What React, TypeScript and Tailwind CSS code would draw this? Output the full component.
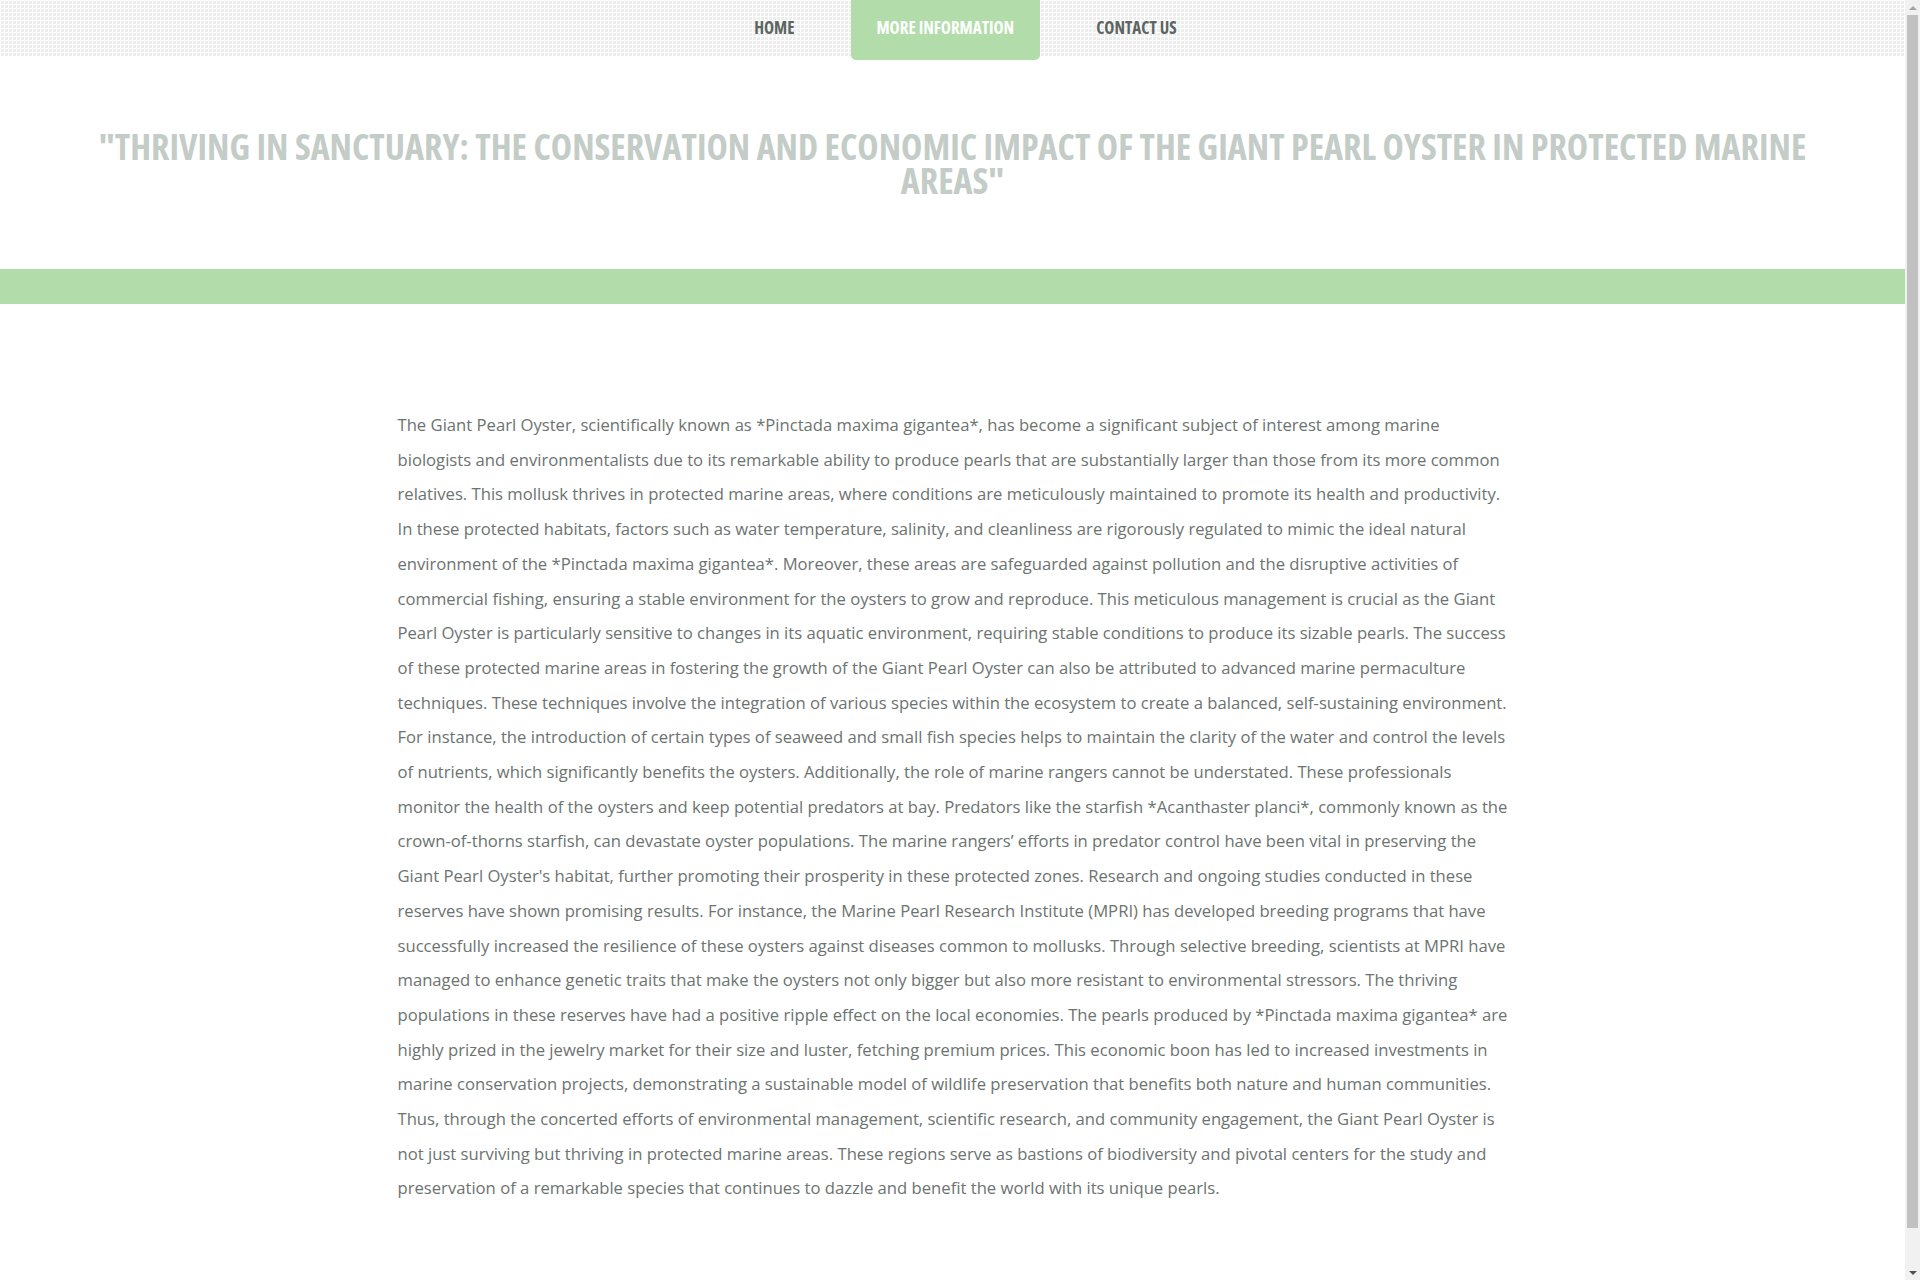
const links = [
  { label: "HOME", active: false },
  { label: "MORE INFORMATION", active: true },
  { label: "CONTACT US", active: false },
];

const title =
  '"THRIVING IN SANCTUARY: THE CONSERVATION AND ECONOMIC IMPACT OF THE GIANT PEARL OYSTER IN PROTECTED MARINE AREAS"';

const body =
  "The Giant Pearl Oyster, scientifically known as *Pinctada maxima gigantea*, has become a significant subject of interest among marine biologists and environmentalists due to its remarkable ability to produce pearls that are substantially larger than those from its more common relatives. This mollusk thrives in protected marine areas, where conditions are meticulously maintained to promote its health and productivity. In these protected habitats, factors such as water temperature, salinity, and cleanliness are rigorously regulated to mimic the ideal natural environment of the *Pinctada maxima gigantea*. Moreover, these areas are safeguarded against pollution and the disruptive activities of commercial fishing, ensuring a stable environment for the oysters to grow and reproduce. This meticulous management is crucial as the Giant Pearl Oyster is particularly sensitive to changes in its aquatic environment, requiring stable conditions to produce its sizable pearls. The success of these protected marine areas in fostering the growth of the Giant Pearl Oyster can also be attributed to advanced marine permaculture techniques. These techniques involve the integration of various species within the ecosystem to create a balanced, self-sustaining environment. For instance, the introduction of certain types of seaweed and small fish species helps to maintain the clarity of the water and control the levels of nutrients, which significantly benefits the oysters. Additionally, the role of marine rangers cannot be understated. These professionals monitor the health of the oysters and keep potential predators at bay. Predators like the starfish *Acanthaster planci*, commonly known as the crown-of-thorns starfish, can devastate oyster populations. The marine rangers\u2019 efforts in predator control have been vital in preserving the Giant Pearl Oyster's habitat, further promoting their prosperity in these protected zones. Research and ongoing studies conducted in these reserves have shown promising results. For instance, the Marine Pearl Research Institute (MPRI) has developed breeding programs that have successfully increased the resilience of these oysters against diseases common to mollusks. Through selective breeding, scientists at MPRI have managed to enhance genetic traits that make the oysters not only bigger but also more resistant to environmental stressors. The thriving populations in these reserves have had a positive ripple effect on the local economies. The pearls produced by *Pinctada maxima gigantea* are highly prized in the jewelry market for their size and luster, fetching premium prices. This economic boon has led to increased investments in marine conservation projects, demonstrating a sustainable model of wildlife preservation that benefits both nature and human communities. Thus, through the concerted efforts of environmental management, scientific research, and community engagement, the Giant Pearl Oyster is not just surviving but thriving in protected marine areas. These regions serve as bastions of biodiversity and pivotal centers for the study and preservation of a remarkable species that continues to dazzle and benefit the world with its unique pearls.";

function NavBar() {
  return (
    <header className="h-14 bg-[image:linear-gradient(90deg,#fff_1px,transparent_1px),linear-gradient(#fff_1px,#ededed_1px)] bg-[size:4px_4px]">
      <nav className="flex justify-center pl-[26px]">
        <ul className="flex gap-[30px]">
          {links.map((link) => (
            <li key={link.label}>
              <a
                href="#"
                className={
                  link.active
                    ? "block h-[60px] rounded-b-[5px] bg-[#b2ddaa] px-[26px] text-[17px] font-bold leading-[56px] text-white [font-stretch:75%]"
                    : "block h-[60px] px-[26px] text-[17px] font-bold leading-[56px] text-[#5b6561] [font-stretch:75%]"
                }
              >
                {link.label}
              </a>
            </li>
          ))}
        </ul>
      </nav>
    </header>
  );
}

// window scrollbar, as in the screenshot
function ScrollBar() {
  return (
    <aside className="flex w-[15px] shrink-0 flex-col items-center bg-[#f1f1f1]">
      <div className="flex h-[15px] items-center justify-center">
        <div className="h-0 w-0 border-x-[4px] border-b-[4px] border-x-transparent border-b-[#a3a3a3]" />
      </div>
      <div className="h-[1213px] w-[11px] bg-[#c1c1c1]" />
      <div className="flex-1" />
      <div className="flex h-[15px] items-center justify-center">
        <div className="h-0 w-0 border-x-[4px] border-t-[4px] border-x-transparent border-t-[#505050]" />
      </div>
    </aside>
  );
}

export default function App() {
  return (
    <div className="flex h-screen overflow-hidden bg-white font-['Open_Sans','Liberation_Sans',sans-serif]">
      <div className="min-w-0 flex-1 overflow-y-auto">
        <NavBar />

        <h1 className="mt-[74px] mb-[71px] px-[60px] text-center text-[36px] font-bold leading-[34px] text-[#c3ccc6] [font-stretch:75%]">
          {title}
        </h1>

        <div className="h-[35px] bg-[#b2ddaa]" />

        <main className="mx-auto w-[1140px] px-[15px] pt-[104px] pb-[115px]">
          <p className="text-[16.65px] leading-[34.7px] text-[#6c7370]">{body}</p>
        </main>
      </div>
      <ScrollBar />
    </div>
  );
}
